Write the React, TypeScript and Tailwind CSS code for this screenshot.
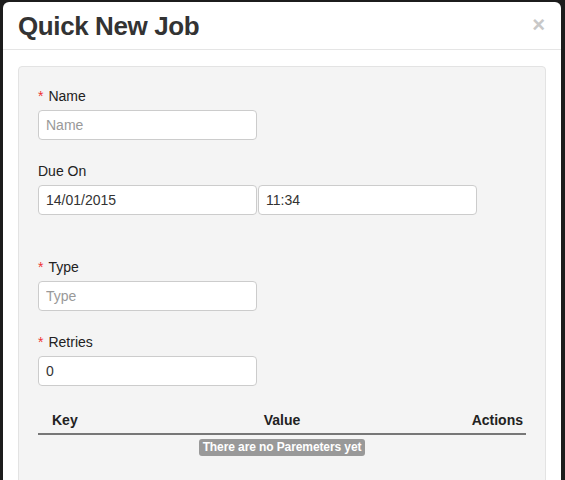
import React from 'react';

const font = { fontFamily: '"Liberation Sans", Arial, sans-serif' };

const Label: React.FC<{ text: string; required?: boolean }> = ({ text, required }) => (
  <div className="h-5 text-[14px] leading-5 text-[#222]">
    {required && <span className="mr-[5px] text-[#e33]">*</span>}
    {text}
  </div>
);

const Field: React.FC<{ placeholder?: string; value?: string }> = ({ placeholder, value }) => (
  <input
    className="mt-1 h-[30px] w-[219px] rounded-[4px] border border-[#ccc] bg-white px-[7px] text-[14px] text-[#333] outline-none placeholder:text-[#999]"
    placeholder={placeholder}
    defaultValue={value}
  />
);

export default function App() {
  return (
    <div className="h-[480px] w-[565px] overflow-hidden bg-[#1c1c1c] pl-[3px] pr-[4px] pt-[2px]" style={font}>
      <div className="h-[600px] rounded-[6px] bg-white">
        {/* Header */}
        <div className="flex h-[48px] items-center justify-between border-b border-[#e5e5e5] px-[15px]">
          <h1 className="text-[26px] font-bold leading-none tracking-[-0.4px] text-[#333]">Quick New Job</h1>
          <span className="-mt-[2px] mr-[1px] text-[22px] font-bold leading-none text-[#c8c8c8]">×</span>
        </div>

        {/* Body */}
        <div className="px-[15px] pt-[16px]">
          <div className="h-[480px] rounded-[4px] border border-[#e3e3e3] bg-[#f4f4f4] px-[19px] pt-[19px]">
            <Label text="Name" required />
            <Field placeholder="Name" />

            <div className="mt-[21px]">
              <Label text="Due On" />
              <div className="flex gap-[1px]">
                <Field value="14/01/2015" />
                <Field value="11:34" />
              </div>
            </div>

            <div className="mt-[42px]">
              <Label text="Type" required />
              <Field placeholder="Type" />
            </div>

            <div className="mt-[21px]">
              <Label text="Retries" required />
              <Field value="0" />
            </div>

            {/* Parameters table */}
            <div className="mt-[24px]">
              <div className="grid grid-cols-3 border-b-2 border-[#777] pb-[3px] text-[14px] font-bold leading-5 text-[#222]">
                <div className="pl-[14px]">Key</div>
                <div className="text-center">Value</div>
                <div className="pr-[3px] text-right">Actions</div>
              </div>
              <div className="mt-[4px] flex justify-center">
                <span className="rounded-[3px] bg-[#999] px-[4px] text-[12px] font-bold leading-[17px] tracking-[-0.1px] text-white">
                  There are no Paremeters yet
                </span>
              </div>
            </div>
          </div>
        </div>
      </div>
    </div>
  );
}
